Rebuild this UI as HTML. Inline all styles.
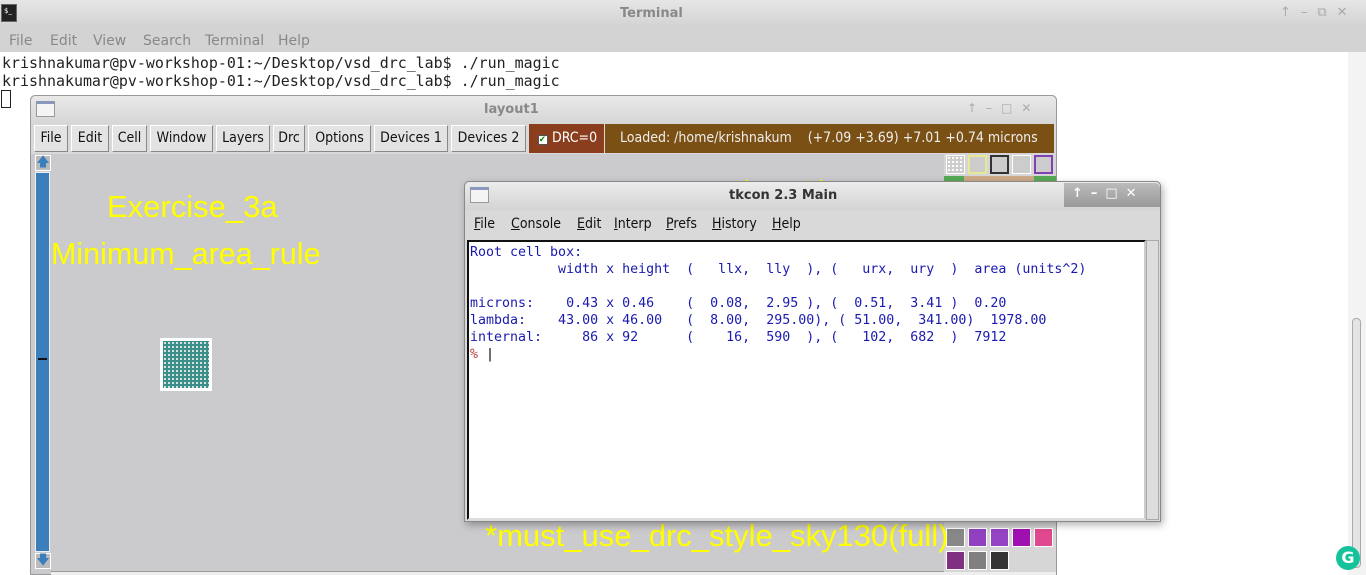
<!DOCTYPE html>
<html><head><style>
*{margin:0;padding:0;box-sizing:border-box}
body{width:1366px;height:575px;overflow:hidden;background:#fff;position:relative;font-family:"DejaVu Sans","Liberation Sans",sans-serif}
.a{position:absolute}
.mono{font-family:"DejaVu Sans Mono","Liberation Mono",monospace;white-space:pre}
.btn{position:absolute;top:125px;height:27px;background:#e3e3e3;border:1px solid #fff;border-right-color:#888;border-bottom-color:#888;font-family:"DejaVu Sans Condensed","DejaVu Sans",sans-serif;font-size:14px;line-height:25px;text-align:center;color:#111}
.sw{position:absolute;width:19px;height:19px;border:1px solid #fff}
.y{position:absolute;color:#ffff00;font-family:"Liberation Sans",sans-serif;white-space:nowrap}
.tm{position:absolute;top:216px;font-size:14px;color:#111;font-family:'DejaVu Sans Condensed','DejaVu Sans',sans-serif}
</style></head><body>
<div class="a" style="left:0;top:0;width:1366px;height:28px;background:linear-gradient(#e6e6e6,#d2d2d2)"></div>
<div class="a" style="left:1px;top:4px;width:16px;height:18px;background:#222;border:1px solid #666"></div>
<div class="a" style="left:4px;top:7px;color:#fff;font-size:7px">$_</div>
<div class="a" style="left:620px;top:6px;font-size:13px;color:#888;font-weight:bold">Terminal</div>
<div class="a" style="left:1280px;top:5px;font-size:13px;color:#aaa;letter-spacing:10px">↑–⧉✕</div>
<div class="a" style="left:0;top:28px;width:1366px;height:24px;background:#d3d3d3"></div>
<div class="a" style="left:9px;top:33px;font-size:14px;color:#888">File</div>
<div class="a" style="left:50px;top:33px;font-size:14px;color:#888">Edit</div>
<div class="a" style="left:93px;top:33px;font-size:14px;color:#888">View</div>
<div class="a" style="left:143px;top:33px;font-size:14px;color:#888">Search</div>
<div class="a" style="left:205px;top:33px;font-size:14px;color:#888">Terminal</div>
<div class="a" style="left:278px;top:33px;font-size:14px;color:#888">Help</div>
<div class="a" style="left:1348px;top:52px;width:18px;height:523px;background:#f3f3f3"></div>
<div class="a" style="left:1352px;top:318px;width:9px;height:250px;border:1px solid #aaa;border-radius:4px;background:#e4e4e4"></div>
<div class="a mono" style="left:2px;top:54px;font-size:14.95px;line-height:18px;color:#222">krishnakumar@pv-workshop-01:~/Desktop/vsd_drc_lab$ ./run_magic
krishnakumar@pv-workshop-01:~/Desktop/vsd_drc_lab$ ./run_magic</div>
<div class="a" style="left:1px;top:90px;width:10px;height:18px;border:1px solid #222"></div>

<div class="a" style="left:30px;top:95px;width:1027px;height:480px;background:#cbcacd;border:1px solid #999;border-radius:5px 5px 0 0"></div>
<div class="a" style="left:31px;top:96px;width:1025px;height:28px;background:linear-gradient(#e9e9e9,#d6d6d6);border-radius:5px 5px 0 0"></div>
<div class="a" style="left:36px;top:101px;width:19px;height:16px;background:#f4f4f4;border:1px solid #999;border-top:3px solid #8899bb"></div>
<div class="a" style="left:484px;top:102px;font-size:13px;color:#888;font-weight:bold">layout1</div>
<div class="a" style="left:967px;top:101px;font-size:12px;color:#aaa;letter-spacing:9px">↑–□✕</div>
<div class="a" style="left:31px;top:124px;width:1025px;height:30px;background:#d9d9d9"></div>
<div class="btn" style="left:34px;width:34px">File</div>
<div class="btn" style="left:71px;width:38px">Edit</div>
<div class="btn" style="left:112px;width:35px">Cell</div>
<div class="btn" style="left:150px;width:63px">Window</div>
<div class="btn" style="left:216px;width:54px">Layers</div>
<div class="btn" style="left:273px;width:32px">Drc</div>
<div class="btn" style="left:308px;width:63px">Options</div>
<div class="btn" style="left:374px;width:74px">Devices 1</div>
<div class="btn" style="left:451px;width:75px">Devices 2</div>
<div class="a" style="left:529px;top:124px;width:75px;height:29px;background:#8a3e1e;color:#fff;font-family:'DejaVu Sans Condensed','DejaVu Sans',sans-serif;font-size:14px;line-height:29px;padding-left:9px"><span style="display:inline-block;width:10px;height:10px;background:#fff;border:1px solid #555;color:#080;font-size:9px;line-height:8px">✔</span> DRC=0</div>
<div class="a" style="left:605px;top:124px;width:449px;height:29px;background:#7b5014;color:#eee;font-family:'DejaVu Sans Condensed','DejaVu Sans',sans-serif;font-size:14px;line-height:29px;padding-left:15px;white-space:pre;overflow:hidden">Loaded: /home/krishnakum    (+7.09 +3.69) +7.01 +0.74 microns</div>
<div class="a" style="left:35px;top:155px;width:16px;height:16px;background:#bbb;border:1px solid #fff;color:#3a7fbb;font-size:13px;line-height:14px;text-align:center">🡅</div>
<div class="a" style="left:35px;top:172px;width:15px;height:380px;background:#3a7fbb;border:1px solid #eee"></div>
<div class="a" style="left:38px;top:358px;width:9px;height:2px;background:#111"></div>
<div class="a" style="left:35px;top:553px;width:16px;height:16px;background:#bbb;border:1px solid #fff;color:#3a7fbb;font-size:13px;line-height:14px;text-align:center">🡇</div>
<div class="a" style="left:51px;top:571px;width:1005px;height:4px;background:#eee;border-top:1px solid #999"></div>
<div class="y" style="left:107px;top:189px;font-size:31px">Exercise_3a</div>
<div class="y" style="left:51px;top:237px;font-size:30.5px">Minimum_area_rule</div>
<div class="y" style="left:664px;top:174px;font-size:31px">Exercise_3b</div>
<div class="a" style="left:160px;top:338px;width:52px;height:53px;background:#fff;padding:3px"><div style="width:100%;height:100%;background-color:#3a8f8a;background-image:radial-gradient(circle,#eee 0.9px,transparent 1.2px);background-size:4px 4px"></div></div>
<div class="a" style="left:944px;top:153px;width:112px;height:23px;background:#d6d6d6"></div>
<div class="sw" style="left:946px;top:155px;background:#ccc;background-image:radial-gradient(circle,#fff 1px,transparent 1.3px);background-size:4px 4px"></div>
<div class="sw" style="left:968px;top:155px;background:#ccc;border:2px solid #e8e890"></div>
<div class="sw" style="left:990px;top:155px;background:#ccc;border:2px solid #333"></div>
<div class="sw" style="left:1012px;top:155px;background:#ccc"></div>
<div class="sw" style="left:1034px;top:155px;background:#ccc;border:2px solid #8040b0"></div>
<div class="a" style="left:944px;top:176px;width:112px;height:6px;background:linear-gradient(90deg,#5a5 0 20px,#ca8 20px 90px,#5a5 90px)"></div>
<div class="a" style="left:944px;top:520px;width:112px;height:52px;background:#d6d6d6"></div>
<div class="sw" style="left:946px;top:528px;background:#888"></div>
<div class="sw" style="left:968px;top:528px;background:#9040c0"></div>
<div class="sw" style="left:990px;top:528px;background:#9444c4"></div>
<div class="sw" style="left:1012px;top:528px;background:#a010b0"></div>
<div class="sw" style="left:1034px;top:528px;background:#e04890"></div>
<div class="sw" style="left:946px;top:551px;background:#803080"></div>
<div class="sw" style="left:968px;top:551px;background:#808080"></div>
<div class="sw" style="left:990px;top:551px;background:#333"></div>
<div class="y" style="left:485px;top:518px;font-size:31px">*must_use_drc_style_sky130(full)</div>

<div class="a" style="left:464px;top:181px;width:697px;height:341px;background:#d9d9d9;border:1px solid #888;border-radius:5px 5px 0 0;box-shadow:2px 3px 8px rgba(0,0,0,.3)"></div>
<div class="a" style="left:465px;top:182px;width:695px;height:28px;background:linear-gradient(#ececec,#d4d4d4);border-radius:5px 5px 0 0"></div>
<div class="a" style="left:470px;top:187px;width:19px;height:16px;background:#f4f4f4;border:1px solid #999;border-top:3px solid #8899bb"></div>
<div class="a" style="left:729px;top:188px;font-size:13px;color:#333;font-weight:bold">tkcon 2.3 Main</div>
<div class="a" style="left:1064px;top:183px;width:96px;height:24px;background:linear-gradient(#bbb,#999);border-radius:0 5px 0 0"></div>
<div class="a" style="left:1072px;top:186px;font-size:13px;color:#fff;letter-spacing:8px;font-weight:bold">↑–□✕</div>
<div class="tm" style="left:474px"><u>F</u>ile</div>
<div class="tm" style="left:511px"><u>C</u>onsole</div>
<div class="tm" style="left:577px"><u>E</u>dit</div>
<div class="tm" style="left:614px"><u>I</u>nterp</div>
<div class="tm" style="left:666px"><u>P</u>refs</div>
<div class="tm" style="left:712px"><u>H</u>istory</div>
<div class="tm" style="left:772px"><u>H</u>elp</div>
<div class="a" style="left:467px;top:240px;width:679px;height:280px;background:#fff;border:2px solid #111;border-right-color:#ccc;border-bottom-color:#ddd"></div>
<div class="a" style="left:1146px;top:240px;width:13px;height:280px;background:#ddd;border:1px solid #aaa"></div>
<div class="a mono" style="left:470px;top:244px;font-size:13.3px;line-height:17px;color:#1a1ab0">Root cell box:
           width x height  (   llx,  lly  ), (   urx,  ury  )  area (units^2)

microns:    0.43 x 0.46    (  0.08,  2.95 ), (  0.51,  3.41 )  0.20
lambda:    43.00 x 46.00   (  8.00,  295.00), ( 51.00,  341.00)  1978.00
internal:     86 x 92      (    16,  590  ), (   102,  682  )  7912
<span style="color:#c04040">%</span> <span style="color:#000">|</span></div>
<div class="a" style="left:1336px;top:546px;width:24px;height:24px;border-radius:50%;background:#15c39a;color:#fff;font-weight:bold;font-size:16px;line-height:24px;text-align:center">G</div>
</body></html>
